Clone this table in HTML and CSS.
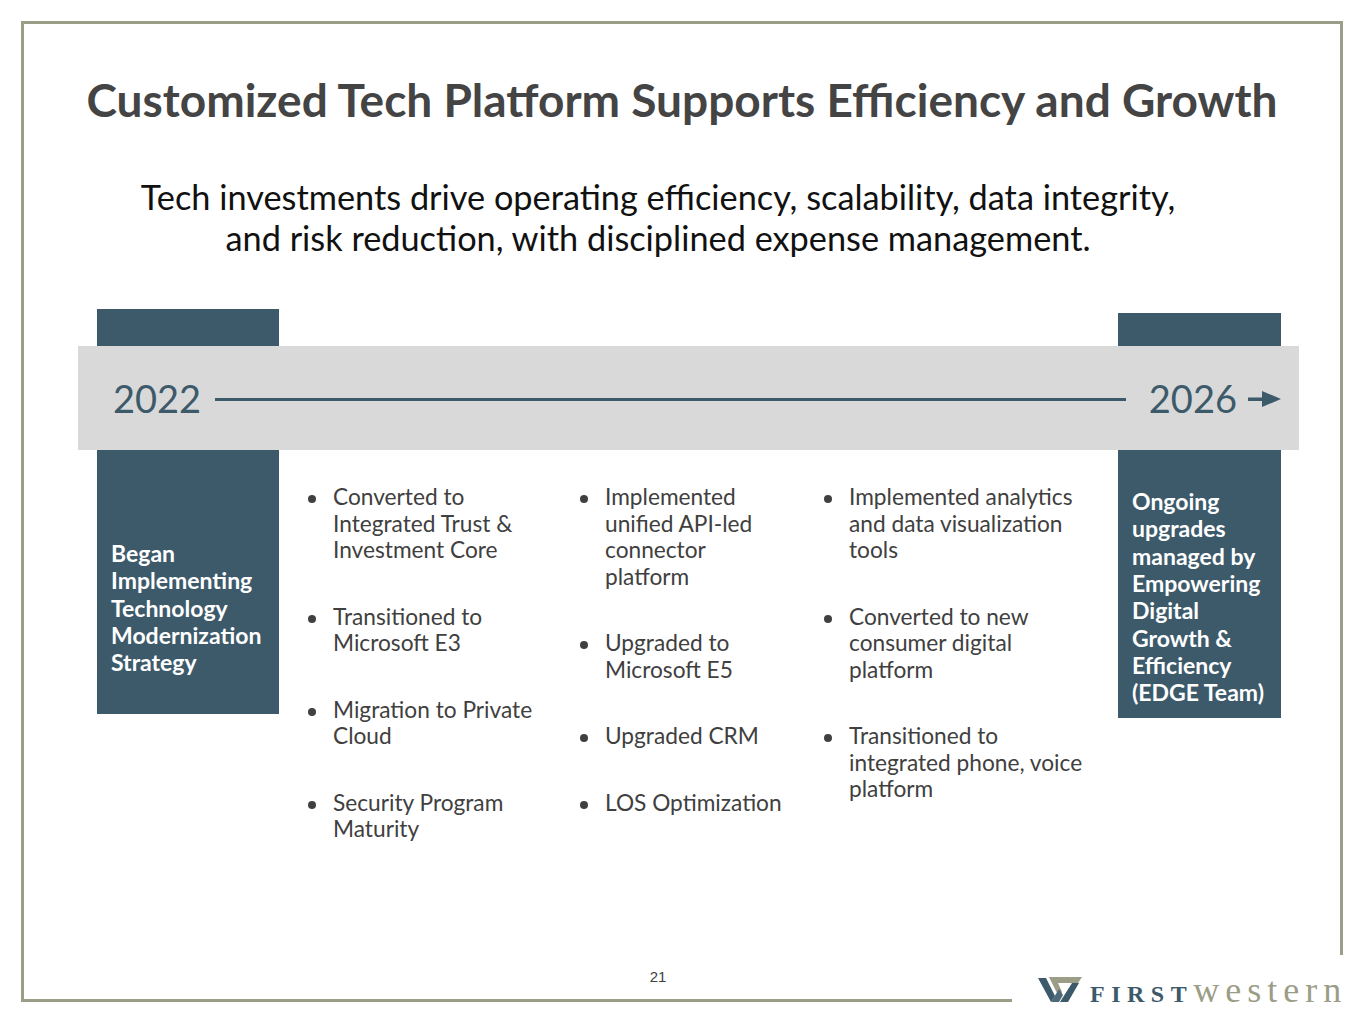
FILE: index.html
```html
<!DOCTYPE html>
<html lang="en">
<head>
<meta charset="utf-8">
<title>Customized Tech Platform</title>
<link rel="stylesheet" href="styles.css">
</head>
<body>
<div class="page">
  <div class="frame">
    <h1 class="title">Customized Tech Platform Supports Efficiency and Growth</h1>
    <p class="subtitle">Tech investments drive operating efficiency, scalability, data integrity,<br>and risk reduction, with disciplined expense management.</p>

    <div class="timeline">
      <div class="box box-left">Began<br>Implementing<br>Technology<br>Modernization<br>Strategy</div>

      <ul class="list list-1">
        <li>Converted to<br>Integrated Trust &amp;<br>Investment Core</li>
        <li>Transitioned to<br>Microsoft E3</li>
        <li>Migration to Private<br>Cloud</li>
        <li>Security Program<br>Maturity</li>
      </ul>

      <ul class="list list-2">
        <li>Implemented<br>unified API-led<br>connector<br>platform</li>
        <li>Upgraded to<br>Microsoft E5</li>
        <li>Upgraded CRM</li>
        <li>LOS Optimization</li>
      </ul>

      <ul class="list list-3">
        <li>Implemented analytics<br>and data visualization<br>tools</li>
        <li>Converted to new<br>consumer digital<br>platform</li>
        <li>Transitioned to<br>integrated phone, voice<br>platform</li>
      </ul>

      <div class="box box-right">Ongoing<br>upgrades<br>managed by<br>Empowering<br>Digital<br>Growth &amp;<br>Efficiency<br>(EDGE Team)</div>

      <div class="band">
        <span class="year">2022</span>
        <span class="band-line"></span>
        <span class="year">2026</span>
        <svg class="arrow" width="33" height="18" viewBox="0 0 33 18">
          <rect x="0" y="7.5" width="18" height="3.5" fill="#3d5a6b"/>
          <polygon points="14,1 33,9 14,17" fill="#3d5a6b"/>
        </svg>
      </div>
    </div>

    <div class="page-num">21</div>
  </div>

  <div class="logo">
    <svg class="logo-mark" width="44" height="26" viewBox="0 0 44 26">
      <polygon points="11,1 44,1 40,7 14,7" fill="#9c9d87"/>
      <polygon points="14,7 20,7 24,16 21,21" fill="#9c9d87"/>
      <polygon points="0,2 8,2 17,20 13,26" fill="#3d5a6b"/>
      <polygon points="13,26 21,13 25,19 21,26" fill="#4e6a7a"/>
      <polygon points="34,7 41,7 30,26 22,26" fill="#3d5a6b"/>
    </svg>
    <span class="logo-first">FIRST</span><span class="logo-western">western</span>
  </div>
</div>
</body>
</html>
```

FILE: styles.css
```css
html, body {
  margin: 0;
  padding: 0;
  background: #ffffff;
}

.page {
  position: relative;
  width: 1365px;
  height: 1024px;
  overflow: hidden;
  font-family: Lato, "Open Sans", sans-serif;
}

.frame {
  margin: 21px 0 0 21px;
  width: 1316px;
  height: 975px;
  border: 3px solid #9c9d87;
  display: flex;
  flex-direction: column;
}

.title {
  margin: 0;
  padding-top: 48px;
  font-family: Lato, sans-serif;
  font-weight: 700;
  font-size: 46px;
  line-height: 1.2;
  color: #444444;
  text-align: center;
  white-space: nowrap;
}

.subtitle {
  margin: 49px 0 0 0;
  padding-right: 48px;
  font-family: Lato, sans-serif;
  font-weight: 400;
  font-size: 34.3px;
  line-height: 41px;
  color: #111111;
  text-align: center;
  white-space: nowrap;
}

.timeline {
  position: relative;
  margin: 51px 0 0 54px;
  width: 1221px;
  display: flex;
  align-items: flex-start;
}

.box {
  box-sizing: border-box;
  height: 405px;
  background: #3d5a6b;
  color: #ffffff;
  font-weight: 700;
  font-size: 23px;
  line-height: 27.3px;
  padding-left: 14px;
  white-space: nowrap;
}

.box-left {
  margin-left: 19px;
  width: 182px;
  padding-top: 231px;
}

.box-right {
  margin-top: 4px;
  width: 163px;
  padding-top: 175px;
}

.list {
  list-style: none;
  margin: 0;
  padding: 175px 0 0 0;
  box-sizing: border-box;
  font-size: 22.7px;
  line-height: 26.5px;
  color: #404040;
  white-space: nowrap;
}

.list-1 {
  margin-left: 29px;
  width: 272px;
}

.list-2 {
  width: 244px;
}

.list-3 {
  width: 294px;
}

.list li {
  display: flex;
  align-items: flex-start;
  margin-bottom: 40px;
}

.list li::before {
  content: "";
  flex: none;
  width: 8px;
  height: 8px;
  margin-top: 11px;
  margin-right: 17px;
  border-radius: 50%;
  background: #404040;
}

.band {
  position: absolute;
  top: 37px;
  left: 0;
  width: 1221px;
  height: 104px;
  box-sizing: border-box;
  padding: 0 18px 0 35px;
  background: #d9d9d9;
  display: flex;
  align-items: center;
}

.year {
  font-size: 38px;
  line-height: 1;
  color: #3d5a6b;
  font-weight: 400;
}

.band-line {
  flex: 1;
  height: 3px;
  margin: 2px 23px 0 14px;
  background: #3d5a6b;
}

.arrow {
  margin-left: 11px;
  margin-top: 2px;
  display: block;
}

.page-num {
  margin-top: auto;
  padding: 0 48px 13px 0;
  text-align: center;
  font-family: "Liberation Sans", Arial, sans-serif;
  font-size: 15px;
  line-height: 18px;
  color: #404040;
}

.logo {
  position: absolute;
  left: 1012px;
  top: 955px;
  width: 353px;
  height: 69px;
  box-sizing: border-box;
  background: #ffffff;
  padding: 17px 0 0 26px;
  display: flex;
  align-items: baseline;
}

.logo-mark {
  display: inline-block;
}

.logo-first {
  margin-left: 8px;
  font-family: "Liberation Serif", "Times New Roman", serif;
  font-weight: 700;
  font-size: 24px;
  line-height: 1;
  letter-spacing: 6.5px;
  color: #3d5a6b;
}

.logo-western {
  font-family: "Liberation Serif", "Times New Roman", serif;
  font-weight: 400;
  font-size: 36px;
  line-height: 1;
  letter-spacing: 6px;
  color: #9c9d87;
}
```
